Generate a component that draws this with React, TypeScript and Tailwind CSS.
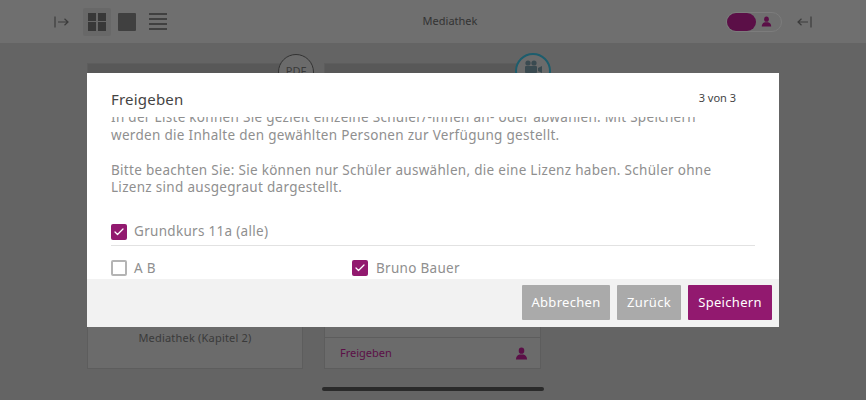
import { Check } from 'lucide-react';

const font = { fontFamily: '"Noto Sans", "Open Sans", sans-serif' };

function PersonIcon({ className }: { className: string }) {
  return (
    <svg viewBox="0 0 14 14" className={className} fill="currentColor">
      <ellipse cx="7" cy="4" rx="3" ry="3.4" />
      <path d="M1 13.5 C1 10 3 8.4 5 8 L9 8 C11 8.4 13 10 13 13.5 Z" />
    </svg>
  );
}

function Checkbox({ checked }: { checked: boolean }) {
  return checked ? (
    <span className="w-4 h-4 flex items-center justify-center rounded-[2px] bg-[#92196f] text-white shrink-0">
      <Check className="w-3 h-3" strokeWidth={2.5} />
    </span>
  ) : (
    <span className="w-4 h-4 rounded-[2px] border-2 border-[#b4b4b4] bg-white shrink-0" />
  );
}

function ViewIcons() {
  return (
    <div className="flex items-center">
      <svg viewBox="0 0 16 12" className="w-4 h-3 text-[#3c3c3c] mr-[13px]" fill="none" stroke="currentColor" strokeWidth="1.2">
        <path d="M1 0.5 V11.5 M4 6 H14 M10.5 2.8 L14 6 L10.5 9.2" />
      </svg>
      <div className="w-[28px] h-[28px] flex items-center justify-center bg-[#686868] rounded-[2px] mr-[3px]">
        <div className="grid grid-cols-2 gap-[1.5px] w-[18px] h-[18px]">
          <span className="bg-[#383838]" />
          <span className="bg-[#383838]" />
          <span className="bg-[#383838]" />
          <span className="bg-[#383838]" />
        </div>
      </div>
      <div className="w-[18px] h-[18px] bg-[#404040] rounded-[1px] ml-[4px] mr-[13px]" />
      <div className="w-[18px] h-[18px] flex flex-col justify-between">
        <span className="h-[2px] bg-[#404040]" />
        <span className="h-[2px] bg-[#404040]" />
        <span className="h-[2px] bg-[#404040]" />
        <span className="h-[2px] bg-[#404040]" />
      </div>
    </div>
  );
}

function Header() {
  return (
    <header className="h-[43px] shrink-0 bg-[#6f6f6f] pl-[54px] pr-[54px] flex items-center justify-between relative">
      <ViewIcons />
      <div className="absolute left-[34px] right-0 text-center text-[11px] text-[#333]">Mediathek</div>
      <div className="flex items-center gap-[14px]">
        <div className="w-[56px] h-[20px] rounded-full border border-[#7c7c7c] flex items-center">
          <span className="w-[29px] h-[18px] rounded-full bg-[#5b0f47]" />
          <PersonIcon className="w-[11px] h-[11px] ml-[5px] text-[#5b0f47]" />
        </div>
        <svg viewBox="0 0 16 12" className="w-4 h-3 text-[#3c3c3c]" fill="none" stroke="currentColor" strokeWidth="1.2">
          <path d="M15 0.5 V11.5 M12 6 H2 M5.5 2.8 L2 6 L5.5 9.2" />
        </svg>
      </div>
    </header>
  );
}

function Backdrop() {
  return (
    <div className="flex pl-[87px] pt-5 gap-[21px]">
      <div className="relative w-[216px] h-[306px] bg-[#6b6b6b] border border-[#5d5d5d] flex flex-col justify-between items-center">
        <div className="h-[10px] w-full bg-[#585858]" />
        <div className="absolute -top-[10px] left-[208px] w-9 h-9 rounded-full bg-[#6b6b6b] border border-[#333] text-[11px] text-[#3a3a3a] flex items-center justify-center -translate-x-1/2 pb-[2px]">PDF</div>
        <div className="text-[11px] tracking-[0.2px] text-[#3a3a3a] pb-[22px]">Mediathek (Kapitel 2)</div>
      </div>
      <div className="relative w-[217px] h-[306px] bg-[#6b6b6b] border border-[#5d5d5d] flex flex-col">
        <div className="h-[10px] w-full bg-[#585858]" />
        <div className="absolute -top-[11px] left-[208px] w-9 h-9 rounded-full bg-[#6b6b6b] border-2 border-[#1d5d6d] -translate-x-1/2 flex justify-center pt-[5px]">
          <svg viewBox="0 0 20 14" className="w-[20px] h-[14px] text-[#3a4a50]" fill="currentColor">
            <circle cx="5" cy="3" r="2.6" />
            <circle cx="11" cy="3" r="2.6" />
            <rect x="2" y="6" width="12" height="7" rx="1" />
            <path d="M15 8 L19 6 V13 L15 11 Z" />
          </svg>
        </div>
        <div className="mt-auto h-[22px] border-t border-[#5d5d5d] flex justify-end pr-[12px]">
          <span className="w-[13px] h-[11px] rounded-b-full border-2 border-t-0 border-[#1d6d80]" />
        </div>
        <div className="h-[31px] border-t border-[#5d5d5d] flex items-center justify-between pl-[15px] pr-[12px]">
          <span className="text-[11px] text-[#5b0f47]">Freigeben</span>
          <PersonIcon className="w-[13px] h-[13px] text-[#5b0f47]" />
        </div>
      </div>
    </div>
  );
}

function Modal() {
  return (
    <div className="absolute left-[87px] top-[73px] w-[692px] h-[254px] bg-white flex flex-col">
      <div className="h-[44px] shrink-0 px-6 flex justify-between items-start">
        <h2 className="text-[15px] leading-[20px] tracking-[0.2px] text-[#444] mt-[16px]">Freigeben</h2>
        <span className="text-[11px] leading-[14px] text-[#444] mt-[18px] mr-[19px]">3 von 3</span>
      </div>
      <div className="h-[162px] shrink-0 overflow-hidden px-6 text-[13.5px] leading-[17.5px] tracking-[0.3px] text-[#8f8f8f]">
        <div className="-mt-[8px]">
          <p>In der Liste können Sie gezielt einzelne Schüler/-innen an- oder abwählen. Mit Speichern<br />werden die Inhalte den gewählten Personen zur Verfügung gestellt.</p>
          <p className="mt-[17.5px]">Bitte beachten Sie: Sie können nur Schüler auswählen, die eine Lizenz haben. Schüler ohne<br />Lizenz sind ausgegraut dargestellt.</p>
        </div>
        <div className="mt-[26px] h-[23px] flex items-center gap-[7px] border-b border-[#e2e2e2] pb-[4px]">
          <Checkbox checked />
          <span>Grundkurs 11a (alle)</span>
        </div>
        <div className="mt-[14px] grid grid-cols-[241px_1fr]">
          <div className="flex items-center gap-[7px]">
            <Checkbox checked={false} />
            <span>A B</span>
          </div>
          <div className="flex items-center gap-[8px]">
            <Checkbox checked />
            <span>Bruno Bauer</span>
          </div>
        </div>
      </div>
      <div className="flex-1 bg-[#f2f2f2] flex justify-end items-start gap-[7px] pt-[6px] pr-[7px] text-[13px] tracking-[0.3px] text-white">
        <button className="w-[88px] h-[35px] bg-[#aaaaaa] rounded-[1px]">Abbrechen</button>
        <button className="w-[64px] h-[35px] bg-[#aaaaaa] rounded-[1px]">Zurück</button>
        <button className="w-[84px] h-[35px] bg-[#92196f] rounded-[1px]">Speichern</button>
      </div>
    </div>
  );
}

export default function App() {
  return (
    <div className="relative w-[866px] h-[400px] overflow-hidden bg-[#646464] flex flex-col" style={font}>
      <Header />
      <Backdrop />
      <Modal />
      <div className="absolute left-[322px] top-[387px] w-[222px] h-[4px] rounded-full bg-[#2a2a2a]" />
    </div>
  );
}
